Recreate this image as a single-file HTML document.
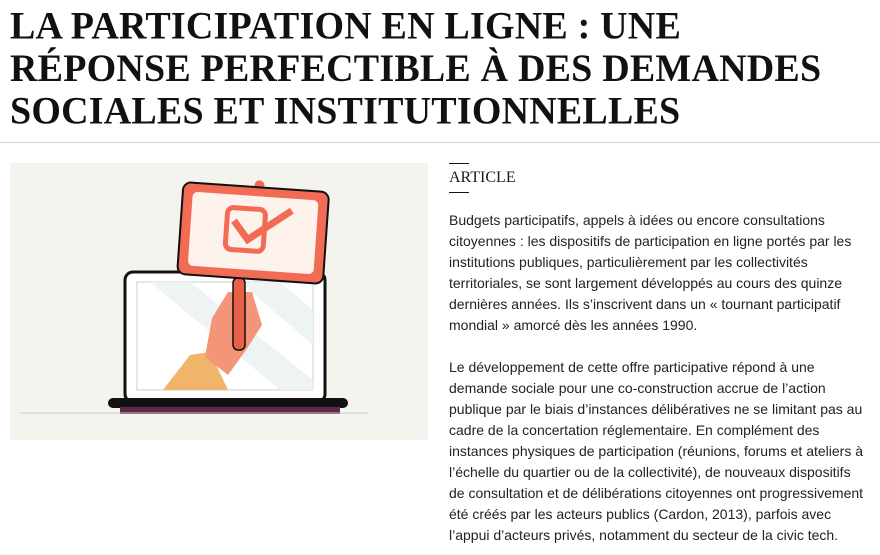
<!DOCTYPE html>
<html><head><meta charset="utf-8"><style>
body{margin:0;width:880px;height:555px;overflow:hidden;background:#fff;font-family:"Liberation Sans",sans-serif;color:#1a1a1a}
h1{position:absolute;left:10px;top:5px;margin:0;font-family:"Liberation Serif",serif;font-weight:bold;font-size:38px;line-height:41px;color:#111;letter-spacing:0.2px;white-space:nowrap;transform:scaleY(1.04);transform-origin:0 0}
.rule{position:absolute;left:0;top:142px;width:880px;height:1px;background:#d0d0d0}
.img{position:absolute;left:10px;top:163px;width:418px;height:277px;background:#f5f3ee}
.lab{position:absolute;left:449px;top:163px;font-family:"Liberation Serif",serif;font-size:16px}
.lab i{display:block;width:20px;height:1px;background:#111}
.lab span{display:block;padding:5px 0 5px}
p{position:absolute;left:449px;margin:0;width:420px;font-size:14px;line-height:21px;color:#222}
</style></head><body>
<h1>LA PARTICIPATION EN LIGNE : UNE<br>RÉPONSE PERFECTIBLE À DES DEMANDES<br>SOCIALES ET INSTITUTIONNELLES</h1>
<div class="rule"></div>
<div class="img"><svg width="418" height="277" viewBox="10 163 418 277">
<rect x="125" y="272" width="200" height="130" rx="8" fill="#fff" stroke="#111" stroke-width="3"/>
<rect x="137" y="282" width="176" height="108" fill="#fff" stroke="#ccc"/>
<polygon points="150,282 190,282 313,380 313,390 280,390" fill="#eef3f3"/>
<polygon points="240,282 280,282 313,310 313,345" fill="#eef3f3"/>
<rect x="108" y="398" width="240" height="10" rx="5" fill="#111"/>
<rect x="120" y="407" width="220" height="7" fill="#5a2a48"/>
<line x1="20" y1="413" x2="368" y2="413" stroke="#ccc"/>
<path d="M163 390 L190 355 L210 352 L228 390 Z" fill="#f0b46a"/>
<path d="M205 357 L212 318 L228 292 L252 292 L262 325 L246 350 L228 375 Z" fill="#f4957a"/>
<rect x="233" y="278" width="12" height="72" rx="5" fill="#e8604a" stroke="#111" stroke-width="1.5"/>
<g transform="rotate(4 253 235)">
<circle cx="256" cy="185" r="5" fill="#f26b55"/>
<rect x="180" y="187" width="146" height="92" rx="8" fill="#f26b55" stroke="#111" stroke-width="2"/>
<rect x="190" y="196" width="126" height="74" rx="5" fill="#fdf3ec"/>
<rect x="226" y="209" width="38" height="42" rx="6" fill="none" stroke="#f26b55" stroke-width="5"/>
<path d="M233 222 L248 240 L290 208" fill="none" stroke="#f26b55" stroke-width="7"/>
</g>
</svg></div>
<div class="lab"><i></i><span>ARTICLE</span><i></i></div>
<p style="top:210px">Budgets participatifs, appels à idées ou encore consultations citoyennes : les dispositifs de participation en ligne portés par les institutions publiques, particulièrement par les collectivités territoriales, se sont largement développés au cours des quinze dernières années. Ils s’inscrivent dans un « tournant participatif mondial » amorcé dès les années 1990.</p>
<p style="top:357px">Le développement de cette offre participative répond à une demande sociale pour une co-construction accrue de l’action publique par le biais d’instances délibératives ne se limitant pas au cadre de la concertation réglementaire. En complément des instances physiques de participation (réunions, forums et ateliers à l’échelle du quartier ou de la collectivité), de nouveaux dispositifs de consultation et de délibérations citoyennes ont progressivement été créés par les acteurs publics (Cardon, 2013), parfois avec l’appui d’acteurs privés, notamment du secteur de la civic tech.</p>
</body></html>
